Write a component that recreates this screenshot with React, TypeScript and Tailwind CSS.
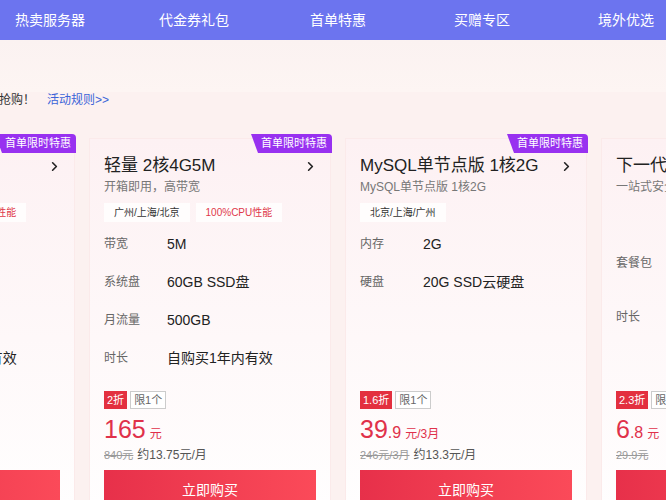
import { ChevronRight } from "lucide-react";

type Spec = { label: string; value: string; h: string };
type Card = {
  title: string;
  sub: string;
  tags: { text: string; red?: boolean }[];
  specs: Spec[];
  off: string;
  big: string;
  dec?: string;
  unit: string;
  orig: string;
  avg?: string;
  hot: boolean;
};

const cards: Card[] = [
  {
    title: "轻量 2核2G4M",
    sub: "开箱即用，高性价比",
    tags: [{ text: "广州/上海/北京" }, { text: "100%CPU性能", red: true }],
    specs: [
      { label: "带宽", value: "4M", h: "h-[38px]" },
      { label: "系统盘", value: "50GB", h: "h-[38px]" },
      { label: "月流量", value: "300GB", h: "h-[38px]" },
      { label: "时长", value: "自购买1年内有效", h: "h-[38px]" },
    ],
    off: "2折",
    big: "99",
    unit: "元",
    orig: "528元",
    avg: "约8.25元/月",
    hot: true,
  },
  {
    title: "轻量 2核4G5M",
    sub: "开箱即用，高带宽",
    tags: [{ text: "广州/上海/北京" }, { text: "100%CPU性能", red: true }],
    specs: [
      { label: "带宽", value: "5M", h: "h-[38px]" },
      { label: "系统盘", value: "60GB SSD盘", h: "h-[38px]" },
      { label: "月流量", value: "500GB", h: "h-[38px]" },
      { label: "时长", value: "自购买1年内有效", h: "h-[38px]" },
    ],
    off: "2折",
    big: "165",
    unit: "元",
    orig: "840元",
    avg: "约13.75元/月",
    hot: true,
  },
  {
    title: "MySQL单节点版 1核2G",
    sub: "MySQL单节点版 1核2G",
    tags: [{ text: "北京/上海/广州" }],
    specs: [
      { label: "内存", value: "2G", h: "h-[38px]" },
      { label: "硬盘", value: "20G SSD云硬盘", h: "h-[38px]" },
    ],
    off: "1.6折",
    big: "39",
    dec: ".9",
    unit: "元/3月",
    orig: "246元/3月",
    avg: "约13.3元/月",
    hot: true,
  },
  {
    title: "下一代云防火墙",
    sub: "一站式安全防护",
    tags: [],
    specs: [
      { label: "套餐包", value: "", h: "h-[76px]" },
      { label: "时长", value: "", h: "h-[32px]" },
    ],
    off: "2.3折",
    big: "6",
    dec: ".8",
    unit: "元",
    orig: "29.9元",
    hot: false,
  },
];

const nav = ["热卖服务器", "代金券礼包", "首单特惠", "买赠专区", "境外优选"];

function ProductCard({ c }: { c: Card }) {
  return (
    <div className="relative flex h-[400px] w-[242px] shrink-0 flex-col border border-[#fbeaea] bg-gradient-to-b from-[#fdf1f3] to-white px-[14px] pt-[15px]">
      {c.hot && (
        <div className="absolute right-[-2px] top-[-5px] flex h-[19px] items-center rounded-tr-[4px] bg-[#9831f0] pl-[10px] pr-[5px] text-[11px] text-white [clip-path:polygon(0_0,100%_0,100%_100%,7px_100%)]">
          首单限时特惠
        </div>
      )}
      <div className="flex h-[24px] items-center justify-between">
        <span className="whitespace-nowrap text-[17px] text-[#222]">{c.title}</span>
        <ChevronRight size={15} strokeWidth={2.6} className="mr-[-2px] text-[#222]" />
      </div>
      <div className="h-[18px] whitespace-nowrap text-[12px] leading-[18px] text-[#777]">{c.sub}</div>
      <div className="mt-[7px] flex h-[19px] gap-[6px]">
        {c.tags.map((t) => (
          <span
            key={t.text}
            className={
              t.red
                ? "flex items-center whitespace-nowrap bg-white/80 px-[10px] text-[10px] text-[#e0384a]"
                : "flex items-center whitespace-nowrap bg-white/80 px-[10px] text-[10px] text-[#333]"
            }
          >
            {t.text}
          </span>
        ))}
      </div>
      <div className="mt-[3px] h-[152px]">
        {c.specs.map((s) => (
          <div key={s.label} className={`flex items-center ${s.h}`}>
            <span className="w-[63px] shrink-0 text-[12px] text-[#666]">{s.label}</span>
            <span className="whitespace-nowrap text-[14px] text-[#222]">{s.value}</span>
          </div>
        ))}
      </div>
      <div className="mt-[14px] flex gap-[3px]">
        <span className="flex h-[18px] items-center bg-[#e3303f] px-[3px] text-[11px] text-white">{c.off}</span>
        <span className="flex h-[18px] items-center border border-[#ccc] bg-white px-[3px] text-[11px] text-[#666]">
          限1个
        </span>
      </div>
      <div className="mt-[8px] flex h-[30px] items-baseline text-[#e0314a]">
        <span className="text-[25px] leading-none">{c.big}</span>
        {c.dec && <span className="text-[16px] leading-none">{c.dec}</span>}
        <span className="ml-[4px] text-[12px] leading-none">{c.unit}</span>
      </div>
      <div className="flex h-[16px] items-center gap-[4px] whitespace-nowrap">
        <span className="text-[11px] text-[#999] line-through">{c.orig}</span>
        {c.avg && <span className="text-[12px] text-[#555]">{c.avg}</span>}
      </div>
      <button className="mt-[7px] flex h-[40px] w-full items-center justify-center bg-gradient-to-r from-[#e7304a] to-[#fb4a59] text-[14px] text-white">
        立即购买
      </button>
    </div>
  );
}

export default function App() {
  return (
    <div className="h-[500px] w-[666px] overflow-hidden bg-[#fcf1f0] font-['Liberation_Sans','Noto_Sans_CJK_SC',sans-serif]">
      <div className="flex h-[40px] items-center bg-[#6c74ef]">
        <div className="ml-[-22px] flex">
          {nav.map((n) => (
            <div key={n} className="w-[144px] shrink-0 text-center text-[14px] text-white">
              {n}
            </div>
          ))}
        </div>
      </div>
      <div className="h-[52px] bg-gradient-to-b from-[#fbf2f1] to-[#fdf5f3]" />
      <div className="flex h-[16px] items-center whitespace-nowrap text-[12px]">
        <span className="ml-[-97px] text-[#333]">数量有限，先到先抢购！</span>
        <span className="ml-[12px] text-[#3b64d8]">活动规则&gt;&gt;</span>
      </div>
      <div className="ml-[-167px] mt-[30px] flex gap-[14px]">
        {cards.map((c) => (
          <ProductCard key={c.title} c={c} />
        ))}
      </div>
    </div>
  );
}
